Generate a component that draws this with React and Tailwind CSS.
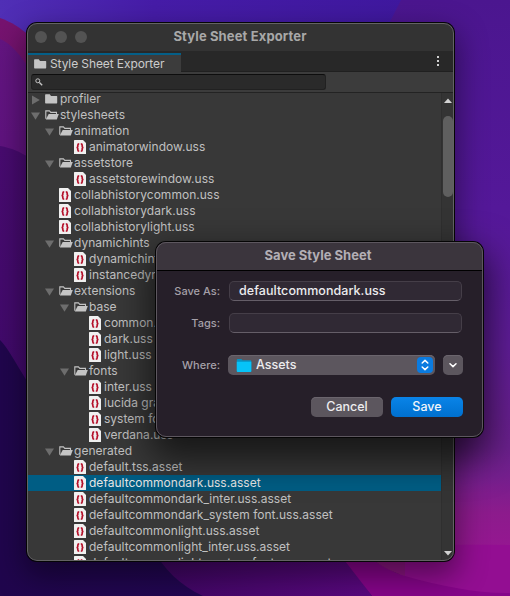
import React from "react";

const rows = [
  ["closed", 0, "profiler"],
  ["open", 0, "stylesheets"],
  ["open", 1, "animation"],
  ["file", 2, "animatorwindow.uss"],
  ["open", 1, "assetstore"],
  ["file", 2, "assetstorewindow.uss"],
  ["file", 1, "collabhistorycommon.uss"],
  ["file", 1, "collabhistorydark.uss"],
  ["file", 1, "collabhistorylight.uss"],
  ["open", 1, "dynamichints"],
  ["file", 2, "dynamichintscommon.uss"],
  ["file", 2, "instancedynamichints.uss"],
  ["open", 1, "extensions"],
  ["open", 2, "base"],
  ["file", 3, "common.uss"],
  ["file", 3, "dark.uss"],
  ["file", 3, "light.uss"],
  ["open", 2, "fonts"],
  ["file", 3, "inter.uss"],
  ["file", 3, "lucida grande.uss"],
  ["file", 3, "system font.uss"],
  ["file", 3, "verdana.uss"],
  ["open", 1, "generated"],
  ["file", 2, "default.tss.asset"],
  ["file", 2, "defaultcommondark.uss.asset", true],
  ["file", 2, "defaultcommondark_inter.uss.asset"],
  ["file", 2, "defaultcommondark_system font.uss.asset"],
  ["file", 2, "defaultcommonlight.uss.asset"],
  ["file", 2, "defaultcommonlight_inter.uss.asset"],
  ["file", 2, "defaultcommonlight_system font.uss.asset"],
];

const indent = ["pl-[4px]", "pl-[18px]", "pl-[33px]", "pl-[48px]"];

function FolderClosed() {
  return (
    <svg width="13" height="12" viewBox="0 0 13 12">
      <path d="M0.1 1.9Q0.1 1.2 0.8 1.2H4.8L6 2.9H11.6Q12.2 2.9 12.2 3.6V9.8Q12.2 10.4 11.6 10.4H0.8Q0.1 10.4 0.1 9.7Z" fill="#c4c4c4" />
    </svg>
  );
}

function FolderOpen() {
  return (
    <svg width="14" height="12" viewBox="0 0 14 12">
      <path d="M0.8 9.8V1.9H4.4L5.8 3.4H11.5V5" fill="none" stroke="#c4c4c4" strokeWidth="1.1" />
      <path d="M3.7 5H13.8L11.8 10.4H0.8Z" fill="#c4c4c4" />
    </svg>
  );
}

function StyleFile() {
  return (
    <svg width="13" height="14" viewBox="0 0 13 14">
      <path d="M0 0.6Q0 0 0.6 0H9L12 3V13.4Q12 14 11.4 14H0.6Q0 14 0 13.4Z" fill="#f0f0f0" />
      <path d="M5.2 3.8Q3.8 3.8 3.8 5.2V6.4Q3.8 7.3 2.6 7.5Q3.8 7.7 3.8 8.6V9.8Q3.8 11.2 5.2 11.2M6.8 3.8Q8.2 3.8 8.2 5.2V6.4Q8.2 7.3 9.4 7.5Q8.2 7.7 8.2 8.6V9.8Q8.2 11.2 6.8 11.2" fill="none" stroke="#b5122b" strokeWidth="1.7" />
    </svg>
  );
}

function Row({ kind, level, label, selected }) {
  return (
    <div className={`flex h-4 shrink-0 items-center ${indent[level]} ${selected ? "bg-[#005d84] text-[#e6e6e6]" : "text-[#c0c0c0]"}`}>
      <div className="flex w-[14px] shrink-0">
        {kind !== "file" && (
          <svg width="10" height="10" viewBox="0 0 10 10" className="mt-px">
            <path d={kind === "open" ? "M0 1.5H9L4.5 8.8Z" : "M1 0.6L8.8 5L1 9.4Z"} fill="#6d6d6d" />
          </svg>
        )}
      </div>
      <div className="flex w-[15px] shrink-0">
        {kind === "file" ? <StyleFile /> : kind === "open" ? <FolderOpen /> : <FolderClosed />}
      </div>
      <span className="whitespace-pre text-[12px] leading-4 tracking-[0.02px]">{label}</span>
    </div>
  );
}

function Wallpaper() {
  return (
    <svg className="absolute inset-0" width="510" height="596" viewBox="0 0 510 596">
      <defs>
        <linearGradient id="top" x1="0" y1="0" x2="1" y2="0">
          <stop offset="0" stopColor="#502fb6" />
          <stop offset="0.3" stopColor="#461ca8" />
          <stop offset="0.8" stopColor="#3f189f" />
        </linearGradient>
        <linearGradient id="right" x1="0" y1="0" x2="0" y2="1">
          <stop offset="0" stopColor="#4b168f" />
          <stop offset="0.35" stopColor="#541899" />
          <stop offset="0.58" stopColor="#601d98" />
          <stop offset="0.75" stopColor="#6a208c" />
          <stop offset="0.8" stopColor="#751f8e" />
          <stop offset="0.86" stopColor="#8c1b8c" />
          <stop offset="0.92" stopColor="#951791" />
          <stop offset="1" stopColor="#900b92" />
        </linearGradient>
        <linearGradient id="left" x1="0" y1="0" x2="0" y2="1">
          <stop offset="0" stopColor="#76136f" />
          <stop offset="1" stopColor="#65107a" />
        </linearGradient>
        <linearGradient id="left2" x1="0" y1="0" x2="0" y2="1">
          <stop offset="0" stopColor="#641582" />
          <stop offset="1" stopColor="#4d0a72" />
        </linearGradient>
        <linearGradient id="left3" x1="0" y1="0" x2="0" y2="1">
          <stop offset="0" stopColor="#480b70" />
          <stop offset="1" stopColor="#3a0866" />
        </linearGradient>
        <linearGradient id="bottom" x1="0" y1="0" x2="1" y2="0">
          <stop offset="0" stopColor="#20064d" />
          <stop offset="1" stopColor="#220652" />
        </linearGradient>
        <linearGradient id="violet" x1="0" y1="0" x2="1" y2="0">
          <stop offset="0" stopColor="#3f0663" />
          <stop offset="1" stopColor="#5a0880" />
        </linearGradient>
      </defs>
      <rect width="510" height="596" fill="url(#top)" />
      <path d="M401 0H510V596H300V200Z" fill="url(#right)" />
      <path d="M0 18C12 22 20 28 30 36L120 120V596H0Z" fill="url(#left)" />
      <path d="M0 39C10 43 20 54 30 70L100 150V596H0Z" fill="url(#left2)" />
      <path d="M0 146C12 148 20 152 30 158L100 260V596H0Z" fill="url(#left3)" />
      <path d="M0 340C10 350 20 372 36 394L200 560V596H0Z" fill="url(#bottom)" />
      <path d="M30 500H420V596H30Z" fill="#25065a" />
      <path d="M0 500H160C170 565 180 580 203 596H0Z" fill="url(#bottom)" />
      <path d="M150 545C164 570 181 586 203 596H372L335 545Z" fill="url(#violet)" />
      <path d="M400 546Q460 544 510 545V596H400Z" fill="#930e92" />
      <path d="M335 548L372 596H510V593C480 594 440 586 405 576C390 571 380 564 366 556Z" fill="#86058a" />
      <path d="M362 552C376 563 390 572 405 576V545H362Z" fill="#8a1580" />
    </svg>
  );
}

function Field({ children }) {
  return (
    <div className="flex h-5 w-[233px] items-center rounded-[5px] border border-[#453e48] border-b-[#655e68] bg-[#302934] pl-[9px] text-[12.5px] font-medium tracking-[0.06px] text-[#ececee]">
      {children}
    </div>
  );
}

function Label({ children }) {
  return <div className="w-[64px] shrink-0 text-right text-[11px] font-medium tracking-normal text-[#a5a0a8]">{children}</div>;
}

function SaveDialog() {
  return (
    <div className="absolute left-[156px] top-[242px] flex h-[195px] w-[327px] flex-col rounded-[10px] bg-[#261f29] shadow-[0_0_0_1px_#050505,0_16px_36px_6px_rgba(0,0,0,0.6)]">
      <div className="flex h-[29px] shrink-0 items-center justify-center rounded-t-[10px] border-b border-black bg-[#3b353d] pr-[3px] text-[13px] font-bold text-[#b3afb5]">
        <span className="-mt-px">Save Style Sheet</span>
      </div>
      <div className="flex flex-col pt-[10px]">
        <div className="flex items-center gap-[9px]">
          <Label>Save As:</Label>
          <Field>defaultcommondark.uss</Field>
        </div>
        <div className="mt-3 flex items-center gap-[9px]">
          <Label>Tags:</Label>
          <Field />
        </div>
        <div className="mt-[22px] flex items-center">
          <Label>Where:</Label>
          <div className="ml-2 flex h-5 w-[207px] items-center rounded-[5px] bg-[#5c565e] pl-2 pr-[2px] shadow-[inset_0_1px_0_#6b656d]">
            <svg width="16" height="15" viewBox="0 0 16 15">
              <path d="M0.8 2Q0.8 0.9 1.8 0.9H5.4L6.6 2.2H14.2Q15.3 2.2 15.3 3.3V13.1Q15.3 14 14.4 14H1.7Q0.8 14 0.8 13.1Z" fill="#0892c2" />
              <path d="M0.8 3.8H15.3V13.1Q15.3 14 14.4 14H1.7Q0.8 14 0.8 13.1Z" fill="#06c3f8" />
            </svg>
            <span className="ml-[4px] flex-1 text-[12.5px] font-medium text-[#ececee]">Assets</span>
            <div className="flex h-4 w-4 items-center justify-center rounded-[4px] bg-[#0a7be0]">
              <svg width="10" height="12" viewBox="0 0 10 12" fill="none" stroke="#fff" strokeWidth="1.5" strokeLinecap="round" strokeLinejoin="round">
                <path d="M2.2 4L5 1.4L7.8 4M2.2 8L5 10.6L7.8 8" />
              </svg>
            </div>
          </div>
          <div className="ml-2 flex h-5 w-5 items-center justify-center rounded-[5px] bg-[#5c565e] shadow-[inset_0_1px_0_#6b656d]">
            <svg width="10" height="8" viewBox="0 0 10 8" fill="none" stroke="#fff" strokeWidth="1.5" strokeLinecap="round" strokeLinejoin="round">
              <path d="M2 2.8L5 5.6L8 2.8" />
            </svg>
          </div>
        </div>
        <div className="mt-[22px] flex justify-end gap-2 pr-5 text-[12.5px] font-medium">
          <div className="flex h-5 w-[72px] items-center justify-center rounded-[5px] bg-[#5c565e] text-[#ececee] shadow-[inset_0_1px_0_#6b656d]">Cancel</div>
          <div className="flex h-5 w-[72px] items-center justify-center rounded-[5px] bg-linear-to-b from-[#0a84e8] to-[#0070cf] text-[#f0f5fa]">Save</div>
        </div>
      </div>
      <div className="pointer-events-none absolute inset-0 rounded-[10px] border border-[#5d575f]" />
    </div>
  );
}

export default function App() {
  return (
    <div className="relative h-[596px] w-[510px] overflow-hidden bg-[#20064d] font-['Inter',sans-serif]">
      <Wallpaper />
      <div className="absolute left-[27px] top-[23px] h-[538px] w-[427px] rounded-[10px] shadow-[0_0_0_1px_#050505,0_12px_30px_4px_rgba(0,0,0,0.42)]">
        <div className="relative flex h-full flex-col overflow-hidden rounded-[10px] bg-[#383838]">
          <div className="flex h-7 shrink-0 items-center bg-[#333333] pl-2">
            <div className="flex w-[52px] shrink-0 gap-2">
              <div className="h-3 w-3 rounded-full bg-[#535353]" />
              <div className="h-3 w-3 rounded-full bg-[#535353]" />
              <div className="h-3 w-3 rounded-full bg-[#535353]" />
            </div>
            <div className="flex-1 pr-[61px] text-center text-[13px] font-bold tracking-[0.13px] text-[#a8a8a8]">Style Sheet Exporter</div>
          </div>
          <div className="flex h-[21px] shrink-0 items-end justify-between border-b border-[#202020] bg-[#282828] pr-[10px]">
            <div className="-mb-px flex h-[19px] w-[154px] items-center border-t-2 border-[#045f88] bg-[#3c3c3c] pl-[7px] text-[12px] tracking-[-0.1px] text-[#cccccc]">
              <FolderClosed />
              <span className="ml-[3px] mt-px whitespace-pre leading-4">Style Sheet Exporter</span>
            </div>
            <div className="mb-[5px] flex w-3 flex-col items-center gap-[2px]">
              <div className="h-[2px] w-[2px] bg-[#d0d0d0]" />
              <div className="h-[2px] w-[2px] bg-[#d0d0d0]" />
              <div className="h-[2px] w-[2px] bg-[#d0d0d0]" />
            </div>
          </div>
          <div className="flex h-[21px] shrink-0 items-start border-b border-[#232323] bg-[#3c3c3c] pl-1 pt-[2px]">
            <div className="flex h-4 w-[295px] items-center rounded-[3px] border border-[#212121] border-t-[#0d0d0d] bg-[#2a2a2a] pl-[3px]">
              <svg width="8" height="8" viewBox="0 0 8 8" fill="none" stroke="#c4c4c4">
                <circle cx="2.8" cy="2.8" r="2" />
                <path d="M4.4 4.4L7.2 7.2" strokeWidth="1.4" />
              </svg>
            </div>
          </div>
          <div className="flex min-h-0 flex-1">
            <div className="flex min-w-0 flex-1 flex-col overflow-hidden">
              <div className="-mt-[2px] flex flex-col">
                {rows.map(([kind, level, label, selected]) => (
                  <Row key={label} kind={kind} level={level} label={label} selected={selected} />
                ))}
              </div>
            </div>
            <div className="flex w-[13px] shrink-0 flex-col items-center justify-between border-l border-[#2f2f2f] bg-[#343434] pb-[5px] pt-[5px]">
              <div className="flex flex-col items-center gap-[13px]">
                <svg width="8" height="5" viewBox="0 0 8 5"><path d="M0 5L4 0.5L8 5Z" fill="#d2d2d2" /></svg>
                <div className="h-[81px] w-[10px] rounded-full bg-[#5f5f5f]" />
              </div>
              <svg width="8" height="5" viewBox="0 0 8 5"><path d="M0 0L4 4.5L8 0Z" fill="#d2d2d2" /></svg>
            </div>
          </div>
          <div className="pointer-events-none absolute inset-0 rounded-[10px] border border-[#636363]" />
        </div>
      </div>
      <SaveDialog />
    </div>
  );
}
